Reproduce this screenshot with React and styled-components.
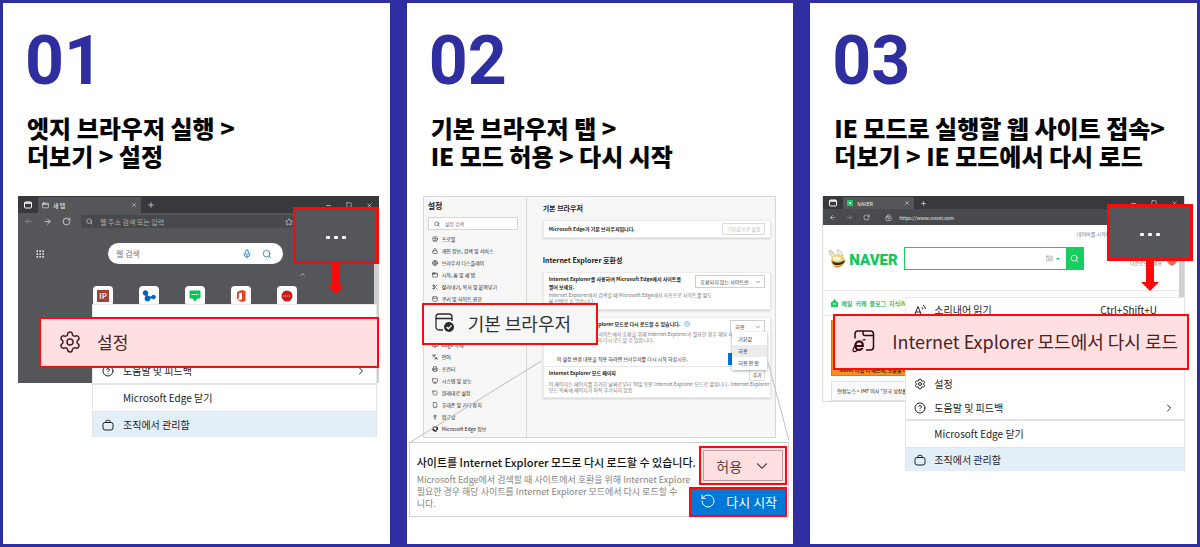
import React from "react";
import styled, { createGlobalStyle } from "styled-components";
import {
  Settings, CircleHelp, ChevronRight, ChevronDown, Search, Mic, RotateCcw, RotateCw,
  ArrowLeft, ArrowRight, X, Plus, Minus, Square, Grip, Star, Lock, LockKeyhole, Globe,
  PanelTop, Scissors, Languages, Printer, Monitor, Smartphone, PersonStanding,
  CircleUser, BookOpen, ChevronUp, AppWindow, Keyboard,
} from "lucide-react";

const RED = "#fa0a0a";
const NAVY = "#2e2ea0";
const SLATE = "#54565a";
const GREEN = "#19ce60";

const GlobalStyle = createGlobalStyle`
  *, *::before, *::after { box-sizing: border-box; }
  body { margin: 0; background: ${NAVY}; color: #222; font-family: "Noto Sans CJK KR", sans-serif; }
  button, input, select { font-family: inherit; color: inherit; margin: 0; padding: 0; border: 0; background: none; border-radius: 0; }
  h2, h3, h4, p, ul, figure { margin: 0; padding: 0; }
  ul { list-style: none; }
  svg { display: block; flex: none; }
`;

/* ---------- page ---------- */

const Page = styled.main`
  min-height: 100vh;
  display: grid;
  grid-template-columns: repeat(3, minmax(0, 1fr));
  gap: 17px;
  padding: 3px;
  background: ${NAVY};
`;

const Step = styled.section`
  background: #fff;
  padding-top: 25px;
`;

const StepNumber = styled.p`
  padding-left: 22px;
  font-family: Roboto, sans-serif;
  font-weight: 700;
  font-size: 68px;
  line-height: 66px;
  color: ${NAVY};
`;

const StepTitle = styled.h2`
  margin-top: 20px;
  padding-left: 24px;
  font-weight: 900;
  font-size: 24px;
  line-height: 28px;
  color: #050505;
  white-space: nowrap;
`;

const Figure = styled.figure`
  position: relative;
  margin: 26px ${(p) => p.$right}px 0 ${(p) => p.$left}px;
`;

/* ---------- browser window ---------- */

const BrowserWindow = styled.div`
  height: ${(p) => p.$height}px;
  display: flex;
  flex-direction: column;
  overflow: hidden;
  background: ${(p) => (p.$light ? "#fff" : SLATE)};
  border: ${(p) => (p.$light ? "1px solid #dcdcdc" : "0")};
  border-top: 0;
`;

const TitleBar = styled.div`
  height: ${(p) => p.$height}px;
  display: flex;
  align-items: center;
  padding: 1px 6px 0 6px;
  gap: 6px;
  background: #38393c;
  color: #f2f2f2;
`;

const Tab = styled.div`
  width: ${(p) => p.$width}px;
  align-self: stretch;
  display: flex;
  align-items: center;
  gap: 4px;
  padding: 0 4px;
  font-size: ${(p) => p.$size}px;
  background: ${SLATE};
  span { flex: 1; }
`;

const WindowControls = styled.div`
  margin-left: auto;
  display: flex;
  gap: 14px;
`;

const Toolbar = styled.div`
  height: 17px;
  display: flex;
  align-items: center;
  gap: 10px;
  padding: 0 6px;
  background: ${(p) => (p.$dark ? "#4a4b4f" : SLATE)};
  color: #e4e4e4;
`;

const AddressBar = styled.label`
  flex: 1;
  height: 13px;
  display: flex;
  align-items: center;
  gap: 7px;
  padding: 0 5px;
  margin-right: ${(p) => p.$end}px;
  background: #48494d;
  input {
    flex: 1;
    min-width: 0;
    font-size: ${(p) => p.$size}px;
    color: #e8e8e8;
  }
  input::placeholder { color: #a9abae; opacity: 1; }
`;

/* ---------- new tab page ---------- */

const NewTab = styled.div`
  position: relative;
  flex: 1;
  padding: 13px 0 0 90px;
  color: #fff;
`;

const AppsButton = styled.button`
  position: absolute;
  left: 17px;
  top: 19px;
`;

const WebSearch = styled.label`
  width: 175px;
  height: 21px;
  display: flex;
  align-items: center;
  gap: 10px;
  padding: 0 11px 0 8px;
  border-radius: 11px;
  background: #fff;
  color: #1c78c8;
  input { flex: 1; min-width: 0; font-size: 8px; color: #333; }
  input::placeholder { color: #777; opacity: 1; }
`;

const Collapse = styled.div`
  width: 198px;
  height: 14px;
  display: flex;
  justify-content: flex-end;
  align-items: flex-end;
`;

const Shortcuts = styled.div`
  display: flex;
  gap: 26px;
  margin: 8px 0 0 -15px;
`;

const Shortcut = styled.button`
  width: 20px;
  height: 20px;
  display: grid;
  place-items: center;
  border-radius: 4px;
  background: #fff;
`;

const PageScrollbar = styled.div`
  position: absolute;
  right: 0;
  top: ${(p) => p.$top}px;
  bottom: 0;
  width: 5px;
  background: #d0d0d0;
`;

/* ---------- overflow menu ---------- */

const Menu = styled.div`
  position: absolute;
  top: ${(p) => p.$top}px;
  left: ${(p) => p.$left}px;
  right: ${(p) => p.$right}px;
  padding-top: ${(p) => p.$pad}px;
  background: #fff;
  border: 1px solid #e6e6e6;
  border-width: 1px 1px 0 1px;
`;

const MenuRow = styled.button`
  width: 100%;
  height: ${(p) => p.$height || 24}px;
  display: grid;
  grid-template-columns: 12px 1fr auto;
  column-gap: ${(p) => p.$gap || 9}px;
  align-items: center;
  padding: 0 9px 0 ${(p) => p.$gap || 9}px;
  margin-bottom: ${(p) => p.$after || 0}px;
  font-size: 10px;
  line-height: 14px;
  text-align: left;
  white-space: nowrap;
  background: ${(p) => (p.$selected ? "#e2eff9" : "transparent")};
  border-top: ${(p) => p.$rule || 0}px solid #e4e4e6;
`;

const KeyHint = styled.span`
  padding-right: 18px;
`;

/* ---------- callouts ---------- */

const DotsCallout = styled.button`
  position: absolute;
  top: ${(p) => p.$top}px;
  right: ${(p) => p.$right}px;
  width: 86px;
  height: 57px;
  display: flex;
  align-items: center;
  justify-content: center;
  gap: 4px;
  padding-top: 4px;
  border: 3px solid ${RED};
  background: ${SLATE};
  i { width: 4px; height: 3px; border-radius: 1px; background: #fff; }
  svg { position: absolute; top: 53px; left: 31px; }
`;

const Callout = styled.button`
  position: absolute;
  top: ${(p) => p.$top}px;
  left: ${(p) => p.$left}px;
  right: ${(p) => p.$right}px;
  height: ${(p) => p.$height}px;
  display: flex;
  align-items: center;
  gap: ${(p) => p.$gap}px;
  padding-left: ${(p) => p.$pad}px;
  padding-bottom: 2px;
  border: 2px solid ${RED};
  background: ${(p) => (p.$plain ? "#f6f6f6" : "#ffe0e0")};
  color: ${(p) => (p.$plain ? "#333" : "#4a2226")};
  font-size: ${(p) => p.$size}px;
  white-space: nowrap;
`;

/* ---------- settings window ---------- */

const SettingsWindow = styled.div`
  height: 242px;
  margin: 0 13px 0 14px;
  display: grid;
  grid-template-columns: 103px minmax(0, 1fr);
  border: 1px solid #d8d8d8;
  background: #f7f7f7;
  font-size: 5px;
  line-height: 8px;
  white-space: nowrap;
`;

const Sidebar = styled.nav`
  border-right: 1px solid #d8d8d8;
  padding: 3px 8px 0 4px;
  h3 { font-size: 8px; line-height: 12px; }
`;

const SettingsSearch = styled.label`
  height: 13px;
  margin: 5px 0 3px;
  display: flex;
  align-items: center;
  gap: 5px;
  padding: 0 5px;
  border: 1px solid #d4d4d4;
  background: #fff;
  input { flex: 1; min-width: 0; font-size: 5px; }
  input::placeholder { color: #777; opacity: 1; }
`;

const NavList = styled.ul`
  margin-top: ${(p) => p.$top || 0}px;
  li { height: 12px; display: flex; align-items: center; gap: 4px; padding-left: 4px; }
  a { color: #222; text-decoration: none; }
`;

const SettingsBody = styled.div`
  padding: 6px 4px 0 16px;
  h3 { font-size: 7px; line-height: 10px; color: #1a1a1a; }
`;

const SectionGap = styled.div`
  height: 17px;
`;

const Card = styled.div`
  margin: 7px 0 0;
  height: ${(p) => p.$height}px;
  background: #fff;
  border: 1px solid #ececec;
  box-shadow: 0 1px 2px rgba(0, 0, 0, 0.16);
`;

const Setting = styled.div`
  display: flex;
  align-items: ${(p) => (p.$center ? "center" : "flex-start")};
  justify-content: space-between;
  height: ${(p) => p.$height}px;
  padding: ${(p) => p.$pad || 0}px 5px 0;
  border-top: ${(p) => (p.$rule ? "1px solid #e6e6e6" : "0")};
  > div { min-width: 0; }
  h4 { font-size: 5px; line-height: 8px; font-weight: 600; display: flex; align-items: center; gap: 3px; }
  p { font-size: 5px; line-height: 6px; color: #777; margin-top: ${(p) => p.$space || 0}px; }
  h4 svg { color: #2f8ae0; }
`;

const ExplorerText = styled.div`
  padding-left: 44px;
`;

const RestartNote = styled.div`
  height: 15px;
  display: flex;
  align-items: center;
  justify-content: space-between;
  padding: 0 5px 0 13px;
  font-size: 5px;
`;

const SmallButton = styled.button`
  flex: none;
  width: ${(p) => p.$width}px;
  height: 12px;
  font-size: 5px;
  line-height: 8px;
  border: 1px solid ${(p) => (p.$blue ? "#0078d7" : "#dcdcdc")};
  background: ${(p) => (p.$blue ? "#0078d7" : "#fff")};
  color: ${(p) => (p.$muted ? "#b8b8b8" : "#333")};
`;

const SelectBox = styled.div`
  position: relative;
  width: ${(p) => p.$width};
  height: ${(p) => p.$height}px;
  flex: none;
  color: ${(p) => (p.$pink ? "#5d4044" : "#333")};
  select {
    appearance: none;
    display: block;
    width: 100%;
    height: 100%;
    padding-left: ${(p) => p.$pad}px;
    font-size: ${(p) => p.$size}px;
    border: 1px solid ${(p) => (p.$pink ? "#bb9ea0" : "#cfcfcf")};
    background: ${(p) => (p.$pink ? "#ffe0e0" : "#fff")};
  }
  svg { position: absolute; right: ${(p) => p.$pad}px; top: 50%; translate: 0 -50%; pointer-events: none; }
`;

const Listbox = styled.ul`
  position: absolute;
  top: 136px;
  right: 22px;
  width: 35px;
  padding: 1px 0;
  font-size: 5px;
  background: #fff;
  box-shadow: 0 1px 3px rgba(0, 0, 0, 0.35);
  li { height: 12px; line-height: 12px; padding-left: 6px; }
  li[aria-selected="true"] { background: #ececec; }
`;

const ConnectorLines = styled.svg`
  position: absolute;
  top: 0;
  left: 0;
  width: 100%;
  height: 247px;
`;

const Detail = styled.div`
  margin-top: 4px;
  height: 75px;
  padding: 11px 0 0 7px;
  border: 1px solid #d2d2d2;
  background: #fff;
  white-space: nowrap;
  overflow: hidden;
  h4 { font-size: 11px; line-height: 16px; font-weight: 500; color: #111; }
  p { margin-top: 4px; font-size: 9px; line-height: 12px; color: #858585; }
`;

const AllowFrame = styled.div`
  position: absolute;
  right: 2px;
  top: 250px;
  width: 88px;
  padding: 2px;
  border: 2px solid ${RED};
  background: #ffe0e0;
`;

const RestartButton = styled.button`
  position: absolute;
  right: 2px;
  top: 291px;
  width: 98px;
  height: 30px;
  display: flex;
  align-items: center;
  gap: 10px;
  padding: 0 0 2px 9px;
  font-size: 13px;
  white-space: nowrap;
  color: #fff;
  border: 2px solid ${RED};
  background: #0078d7;
`;

/* ---------- naver page ---------- */

const NaverPage = styled.div`
  position: relative;
  flex: 1;
  padding: 22px 0 0 5px;
`;

const NaverHeader = styled.div`
  display: flex;
  align-items: center;
  gap: 3px;
  height: 23px;
`;

const NaverWord = styled.a`
  width: 52px;
  padding-top: 2px;
  font-family: Roboto, sans-serif;
  font-weight: 900;
  font-size: 15px;
  line-height: 20px;
  color: #12c75a;
  text-decoration: none;
`;

const NaverSearch = styled.div`
  width: 180px;
  height: 23px;
  display: flex;
  align-items: center;
  gap: 3px;
  border: 1px solid ${GREEN};
  input { flex: 1; min-width: 0; height: 100%; }
  button { width: 17px; height: 23px; margin-left: 3px; display: grid; place-items: center; background: ${GREEN}; color: #fff; }
`;

const Caret = styled.i`
  border: 2px solid transparent;
  border-top-color: ${GREEN};
  margin-top: 2px;
`;

const NaverNav = styled.nav`
  display: flex;
  align-items: center;
  gap: 3px;
  height: 26px;
  margin: 20px 0 0 -5px;
  padding-left: 8px;
  border-top: 1px solid #e8e8e8;
  border-bottom: 1px solid #e8e8e8;
  font-size: 6px;
  a { color: #08a84a; text-decoration: none; font-weight: 500; }
`;

const Banner = styled.div`
  height: 56px;
  width: 80px;
  margin: 4px 0 5px 3px;
  display: flex;
  align-items: flex-end;
  padding: 0 0 1px 7px;
  background: #ff8c22;
  border: 1px solid #d87820;
  font-size: 5px;
  line-height: 8px;
  font-weight: 700;
  color: #4a2408;
  white-space: nowrap;
`;

const NewsStrip = styled.div`
  width: 80px;
  height: 20px;
  margin-left: 3px;
  padding-left: 5px;
  border: 1px solid #dedfe2;
  background: #fafafa;
  font-size: 5px;
  line-height: 18px;
  white-space: nowrap;
`;

const TopLink = styled.a`
  position: absolute;
  top: ${(p) => p.$top}px;
  right: ${(p) => p.$right}px;
  font-size: 5px;
  line-height: 8px;
  color: #777;
  text-decoration: none;
`;

const Mascot = styled.svg`
  position: absolute;
  right: 6px;
  top: 27px;
`;

/* ---------- drawings ---------- */

const RedArrow = () => (
  <svg width="18" height="32" viewBox="0 0 18 32" aria-hidden="true">
    <path d="M5 0h8v22h5L9 31 0 22h5z" fill={RED} />
  </svg>
);

const BriefIcon = () => (
  <svg width="12" height="12" viewBox="0 0 12 12" fill="none" stroke="#222">
    <rect x="1" y="3.5" width="10" height="7.5" rx="2" />
    <path d="M4 3.5V2.5a1.2 1.2 0 0 1 1.2-1.2h1.6A1.2 1.2 0 0 1 8 2.5v1" />
  </svg>
);

const ReadAloudIcon = () => (
  <svg width="12" height="12" viewBox="0 0 12 12" fill="none" stroke="#222">
    <path d="M.6 11 4 2.5 7.4 11M1.8 8h4.4M7.8 3.2q1 .8 1 2.2M9 1q2.200 1.400 2.400 4" />
  </svg>
);

const IeModeIcon = () => (
  <svg width="24" height="24" viewBox="0 0 24 24" fill="none" stroke="#35090c" strokeWidth="1.5">
    <path d="M3 9.5V5a3 3 0 0 1 3-3h12.5a3 3 0 0 1 3 3v13a3 3 0 0 1-3 3h-4.5M11 2v2.5a2 2 0 0 0 2 2h8.5" />
    <path d="M3.6 17h7.2c.2-3-1.5-4.6-3.7-4.6s-3.7 1.9-3.7 4.3 1.6 4.2 3.8 4.2c1.6 0 2.7-.7 3.3-2" strokeWidth="2.2" />
    <path d="M10.5 11.2c1.6-.9 2.8-.8 2.9.2M3.5 16c-2.4 3-3.2 5.7-1.9 6.4 1 .5 2.5-.2 3.7-1.2" strokeWidth="1.2" />
  </svg>
);

const DefaultBrowserIcon = () => (
  <svg width="20" height="20" viewBox="0 0 20 20" fill="none" stroke="#2b2b2b" strokeWidth="1.3">
    <path d="M8 17H4a3 3 0 0 1-3-3V4a3 3 0 0 1 3-3h10a3 3 0 0 1 3 3v4M1 5.5h16" />
    <circle cx="14" cy="14" r="5" fill="#2b2b2b" stroke="none" />
    <path d="m11.6 14 1.8 1.8 3.2-3.4" stroke="#fff" />
  </svg>
);

const TabsIcon = () => (
  <svg width="8" height="8" viewBox="0 0 8 8" fill="none" stroke="#fff">
    <rect x=".5" y="1" width="7" height="6" rx="1" />
    <path d="M1 2h6" strokeWidth="1.5" />
  </svg>
);

const EdgeIcon = ({ size }) => (
  <svg width={size} height={size} viewBox="0 0 6 6" fill="none" stroke="#222" strokeWidth="1.4">
    <path d="M.8 3.6C.6 1.8 2 .8 3.2.8c1.3 0 2.2.9 2.2 1.9 0 .7-.6 1-1.4.9M1.5 2.5C1 4 2 5.2 4.6 4.9" />
  </svg>
);

const BeeLogo = () => (
  <svg width="18" height="20" viewBox="0 0 18 20">
    <path d="M1 1q5 1 7 6L5 9Q1 6 1 1z" fill="#e9e4cd" stroke="#a8a184" strokeWidth=".5" />
    <path d="M9 1q5 0 6 6l-5-1z" fill="#f1eee0" stroke="#aaa489" strokeWidth=".5" />
    <ellipse cx="10" cy="12" rx="7" ry="6.5" fill="#e6cf74" />
    <path d="M4 12q6 4 13-1l-1 3q-6 4-11 1z" fill="#3a2d18" />
    <path d="M6 17q5 1 9-2-3 4-8 3.5z" fill="#e8862a" />
    <ellipse cx="9" cy="9.5" rx="4" ry="2" fill="#f8f4dc" />
  </svg>
);

const Ip = styled.span`
  width: 12px;
  height: 12px;
  font-size: 8px;
  line-height: 12px;
  font-weight: 500;
  background: #a3403c;
  color: #fff;
`;

const BlueNodes = () => (
  <svg width="14" height="12" viewBox="0 0 14 12" fill="#0a62b8" stroke="#0a62b8">
    <path d="m4 3 1 5 6-1" fill="none" strokeWidth="2" />
    <circle cx="3.5" cy="3" r="2.3" /><circle cx="5.5" cy="8.5" r="2.5" /><circle cx="11.5" cy="7" r="1.8" />
  </svg>
);

const GreenBubble = () => (
  <svg width="12" height="12" viewBox="0 0 12 12">
    <path d="M1 1h10v7H8l-2 3-2-3H1z" fill="#08c656" stroke="#08c656" strokeLinejoin="round" />
    <path d="M2.5 4.5h7" stroke="#fff" strokeDasharray="1.5 .5" />
  </svg>
);

const OfficeLogo = () => (
  <svg width="10" height="12" viewBox="0 0 10 12">
    <path d="M6 0 1 2v7.5l1.8-.9V3.5L6 2.5v7L1.5 10 6 12l3.5-1V1z" fill="#e0431c" />
  </svg>
);

const RedBall = () => (
  <svg width="12" height="12" viewBox="0 0 12 12">
    <circle cx="6" cy="6" r="5.5" fill="#cc1818" />
    <path d="M2 6h8" stroke="#f4a9a0" strokeDasharray="1.5 .5" />
  </svg>
);

const Dots = ({ top, right }) => (
  <DotsCallout $top={top} $right={right} aria-label="더보기">
    <i /><i /><i />
    <RedArrow />
  </DotsCallout>
);

const Controls = () => (
  <WindowControls>
    <Minus size={7} /><Square size={6} /><X size={7} />
  </WindowControls>
);

const navTop = [
  [CircleUser, "프로필"], [Lock, "개인 정보, 검색 및 서비스"], [Globe, "브라우저 디스플레이"],
  [AppWindow, "시작, 홈 및 새 탭"], [Scissors, "잘라내기, 복사 및 붙여넣기"], [PanelTop, "쿠키 및 사이트 권한"],
];
const navBottom = [
  [BookOpen, "Edge 막대"], [Languages, "언어"], [Printer, "프린터"], [Monitor, "시스템 및 성능"],
  [RotateCcw, "원래대로 설정"], [Smartphone, "휴대폰 및 기타 장치"], [PersonStanding, "접근성"], [EdgeIcon, "Microsoft Edge 정보"],
];

const NavItems = ({ items, top }) => (
  <NavList $top={top}>
    {items.map(([Icon, label]) => (
      <li key={label}><Icon size={6} /><a href="#settings">{label}</a></li>
    ))}
  </NavList>
);

/* ---------- steps ---------- */

function EdgeStep() {
  return (
    <Step>
      <StepNumber>01</StepNumber>
      <StepTitle>엣지 브라우저 실행 &gt;<br />더보기 &gt; 설정</StepTitle>
      <Figure $left={15} $right={11}>
        <BrowserWindow $height={187}>
          <TitleBar $height={17}>
            <TabsIcon />
            <Tab $width={103} $size={6}><AppWindow size={7} /><span>새 탭</span><X size={6} /></Tab>
            <Plus size={8} />
            <Controls />
          </TitleBar>
          <Toolbar>
            <ArrowLeft size={9} color="#8d8f92" /><ArrowRight size={9} /><RotateCw size={9} />
            <AddressBar $size={7} $end={75}>
              <Search size={7} />
              <input aria-label="주소" placeholder="웹 주소 검색 또는 입력" />
              <Star size={8} />
            </AddressBar>
          </Toolbar>
          <NewTab>
            <AppsButton aria-label="앱"><Grip size={10} /></AppsButton>
            <WebSearch>
              <input aria-label="웹 검색" placeholder="웹 검색" />
              <Mic size={10} /><Search size={10} />
            </WebSearch>
            <Collapse><ChevronUp size={7} /></Collapse>
            <Shortcuts>
              <Shortcut><Ip>IP</Ip></Shortcut>
              <Shortcut aria-label="네트워크"><BlueNodes /></Shortcut>
              <Shortcut aria-label="메신저"><GreenBubble /></Shortcut>
              <Shortcut aria-label="오피스"><OfficeLogo /></Shortcut>
              <Shortcut aria-label="뉴스"><RedBall /></Shortcut>
            </Shortcuts>
            <PageScrollbar $top={32} />
          </NewTab>
        </BrowserWindow>
        <Menu $top={108} $left={74} $right={2} $pad={54}>
          <MenuRow><CircleHelp size={12} strokeWidth={2} />도움말 및 피드백<ChevronRight size={12} /></MenuRow>
          <MenuRow $height={28} $rule={2}><span />Microsoft Edge 닫기</MenuRow>
          <MenuRow $height={26} $rule={1} $selected><BriefIcon />조직에서 관리함</MenuRow>
        </Menu>
        <Dots top={11} right={0} />
        <Callout $top={121} $left={21} $right={0} $height={51} $pad={17} $gap={15} $size={17}>
          <Settings size={24} strokeWidth={1.5} />설정
        </Callout>
      </Figure>
    </Step>
  );
}

function DefaultBrowserStep() {
  return (
    <Step>
      <StepNumber>02</StepNumber>
      <StepTitle>기본 브라우저 탭 &gt;<br />IE 모드 허용 &gt; 다시 시작</StepTitle>
      <Figure $left={2} $right={4}>
        <SettingsWindow>
          <Sidebar>
            <h3>설정</h3>
            <SettingsSearch><Search size={6} /><input aria-label="설정 검색" placeholder="설정 검색" /></SettingsSearch>
            <NavItems items={navTop} />
            <NavItems items={navBottom} top={34} />
          </Sidebar>
          <SettingsBody>
            <h3>기본 브라우저</h3>
            <Card $height={18}>
              <Setting $center $height={16}>
                <h4>Microsoft Edge가 기본 브라우저입니다.</h4>
                <SmallButton $muted $width={43} disabled>기본값으로 설정</SmallButton>
              </Setting>
            </Card>
            <SectionGap />
            <h3>Internet Explorer 호환성</h3>
            <Card $height={38}>
              <Setting $height={36} $pad={2} $space={1}>
                <div>
                  <h4>Internet Explorer를 사용하여 Microsoft Edge에서 사이트를</h4>
                  <h4>열어 보세요.</h4>
                  <p>Internet Explorer에서 검색할 때 Microsoft Edge에서 자동으로 사이트를 열도<br />록 선택할 수 있습니다.</p>
                </div>
                <SelectBox $width="70px" $height={13} $pad={4} $size={5}>
                  <select aria-label="사이트 열기"><option>호환되지 않는 사이트만</option></select>
                  <ChevronDown size={6} />
                </SelectBox>
              </Setting>
            </Card>
            <Card $height={81}>
              <Setting $height={33} $pad={2} $space={3}>
                <ExplorerText>
                  <h4>Explorer 모드로 다시 로드할 수 있습니다. <CircleHelp size={6} /></h4>
                  <p>때 사이트에서 호환을 위해 Internet Explorer가 필요한 경우 해당 사이<br />에서 다시 로드할 수 있습니다.</p>
                </ExplorerText>
                <SelectBox $width="35px" $height={13} $pad={4} $size={5}>
                  <select aria-label="다시 로드 허용"><option>허용</option></select>
                  <ChevronDown size={6} />
                </SelectBox>
              </Setting>
              <RestartNote>
                이 설정 변경 내용을 적용 하려면 브라우저를 다시 시작 하십시오.
                <SmallButton $blue $width={37} aria-label="다시 시작" />
              </RestartNote>
              <Setting $rule $height={31} $pad={2} $space={4}>
                <div>
                  <h4>Internet Explorer 모드 페이지</h4>
                  <p>이 페이지는 페이지를 추가한 날짜로부터 30일 동안 Internet Explorer 모드로 열립니다. Internet Explorer<br />모드 목록에 페이지가 아직 추가되지 않음</p>
                </div>
                <AddSlot><SmallButton $width={16}>추가</SmallButton></AddSlot>
              </Setting>
            </Card>
          </SettingsBody>
        </SettingsWindow>
        <Listbox role="listbox" aria-label="허용 옵션">
          <li role="option" aria-selected="false">기본값</li>
          <li role="option" aria-selected="true">허용</li>
          <li role="option" aria-selected="false">허용 안 함</li>
        </Listbox>
        <ConnectorLines viewBox="0 0 380 247" preserveAspectRatio="none" aria-hidden="true">
          <path d="M0 247 132 165M358 165l22 82" fill="none" stroke="#c4c4c4" />
        </ConnectorLines>
        <Detail>
          <h4>사이트를 Internet Explorer 모드로 다시 로드할 수 있습니다.</h4>
          <p>Microsoft Edge에서 검색할 때 사이트에서 호환을 위해 Internet Explore<br />필요한 경우 해당 사이트를 Internet Explorer 모드에서 다시 로드할 수<br />니다.</p>
        </Detail>
        <AllowFrame>
          <SelectBox $width="100%" $height={31} $pad={12} $size={14} $pink>
            <select aria-label="허용"><option>허용</option></select>
            <ChevronDown size={18} strokeWidth={1.5} />
          </SelectBox>
        </AllowFrame>
        <RestartButton><RotateCcw size={16} strokeWidth={1.5} />다시 시작</RestartButton>
        <Callout $plain $top={107} $left={13} $right={191} $height={42} $pad={11} $gap={13} $size={18}>
          <DefaultBrowserIcon />기본 브라우저
        </Callout>
      </Figure>
    </Step>
  );
}

const AddSlot = styled.div`
  flex: none;
  width: 16px;
  display: flex;
`;

function IeModeStep() {
  return (
    <Step>
      <StepNumber>03</StepNumber>
      <StepTitle>IE 모드로 실행할 웹 사이트 접속&gt;<br />더보기 &gt; IE 모드에서 다시 로드</StepTitle>
      <Figure $left={12} $right={12}>
        <BrowserWindow $light $height={206}>
          <TitleBar $height={14}>
            <TabsIcon />
            <Tab $width={71} $size={5}>
              <svg width="6" height="6" viewBox="0 0 6 6"><path d="M0 0h6v6H0z" fill={GREEN} /><path d="M2 2h2v2H2z" fill="#fff" /></svg>
              <span>NAVER</span><X size={6} />
            </Tab>
            <Plus size={7} />
            <Controls />
          </TitleBar>
          <Toolbar $dark>
            <ArrowLeft size={7} /><ArrowRight size={7} color="#97999c" /><RotateCw size={7} />
            <AddressBar $size={5} $end={70}>
              <LockKeyhole size={7} />
              <input aria-label="주소" defaultValue="https://www.naver.com" />
            </AddressBar>
          </Toolbar>
          <NaverPage>
            <TopLink href="#start" $top={5} $right={60}>네이버를 시작페이지로</TopLink>
            <NaverHeader>
              <BeeLogo />
              <NaverWord href="#naver">NAVER</NaverWord>
              <NaverSearch>
                <input aria-label="네이버 검색" />
                <Keyboard size={7} color="#999" /><Caret />
                <button aria-label="검색"><Search size={9} /></button>
              </NaverSearch>
            </NaverHeader>
            <TopLink href="#whale" $top={34} $right={22}>다운로드하세요</TopLink>
            <Mascot width="12" height="14" viewBox="0 0 12 14">
              <path d="M0 2h12v6q-2 4-6 6Q2 12 0 8z" fill="#dc7058" /><circle cx="6" cy="6" r="3" fill="#f5cdbd" />
            </Mascot>
            <NaverNav>
              <svg width="7" height="8" viewBox="0 0 7 8"><path d="M0 3h1l2.5-3L6 3h1v5H0z" fill={GREEN} /><path d="M2 5h3" stroke="#fff" /></svg>
              <a href="#mail">메일</a><a href="#cafe">카페</a><a href="#blog">블로그</a><a href="#kin">지식iN</a><a href="#shop">쇼핑</a>
            </NaverNav>
            <Banner>Naver 나를 더 예쁘게, 오늘을 더 특별하게</Banner>
            <NewsStrip>연합뉴스 &gt; IMF 이사 "한국 성장률 전망</NewsStrip>
            <PageScrollbar $top={30} />
          </NaverPage>
        </BrowserWindow>
        <Menu $top={101} $left={83} $right={0} $pad={0}>
          <MenuRow $gap={8} $after={50}><ReadAloudIcon />소리내어 읽기<KeyHint>Ctrl+Shift+U</KeyHint></MenuRow>
          <MenuRow $gap={8}><Settings size={12} strokeWidth={2} />설정</MenuRow>
          <MenuRow $gap={8} $height={23}><CircleHelp size={12} strokeWidth={2} />도움말 및 피드백<ChevronRight size={12} /></MenuRow>
          <MenuRow $gap={8} $height={28} $rule={2}><span />Microsoft Edge 닫기</MenuRow>
          <MenuRow $gap={8} $height={24} $rule={1} $selected><BriefIcon />조직에서 관리함</MenuRow>
        </Menu>
        <Dots top={8} right={-8} />
        <Callout $top={118} $left={11} $right={-4} $height={56} $pad={17} $gap={16} $size={18}>
          <IeModeIcon />Internet Explorer 모드에서 다시 로드
        </Callout>
      </Figure>
    </Step>
  );
}

export default function App() {
  return (
    <>
      <GlobalStyle />
      <Page>
        <EdgeStep />
        <DefaultBrowserStep />
        <IeModeStep />
      </Page>
    </>
  );
}
